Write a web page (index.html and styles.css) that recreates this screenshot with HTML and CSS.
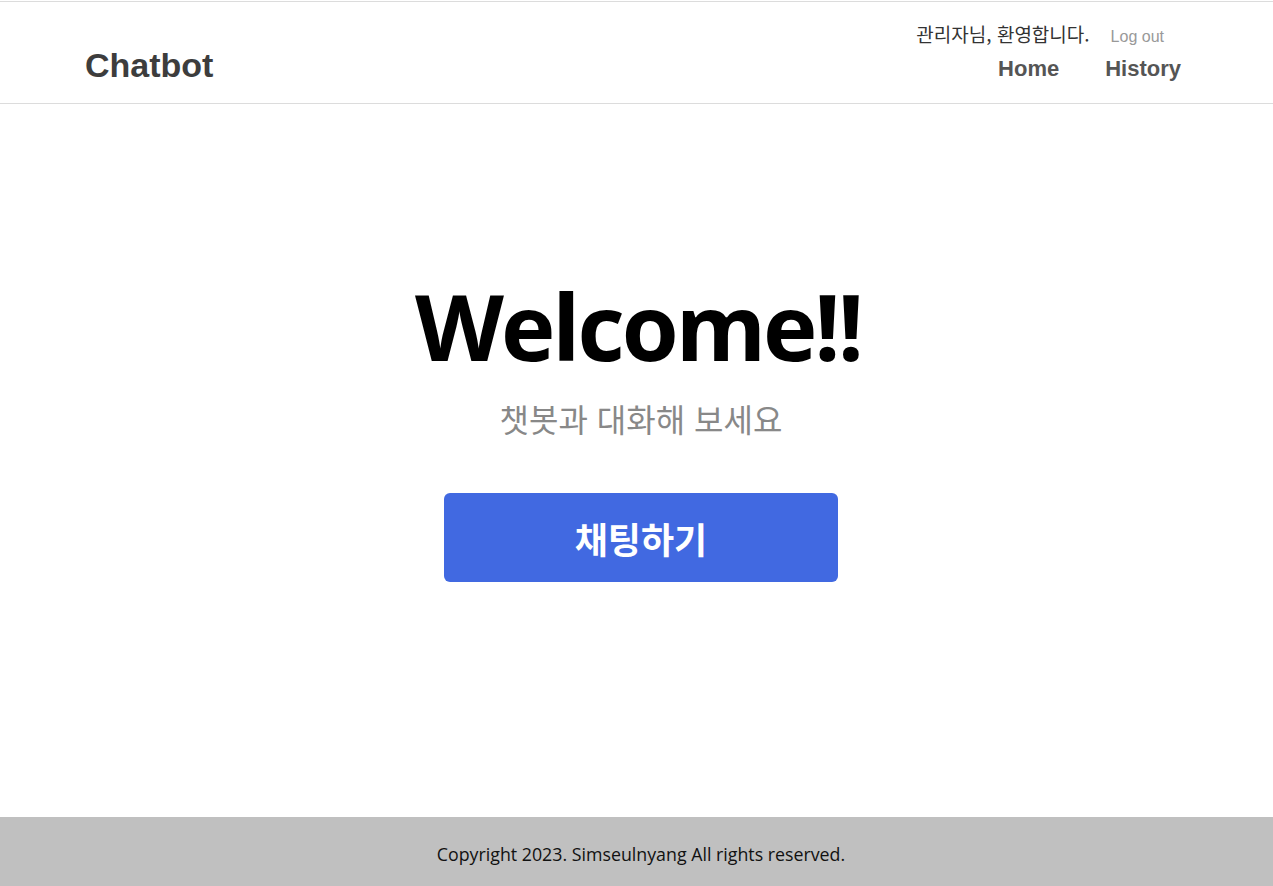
FILE: index.html
```html
<!DOCTYPE html>
<html lang="ko">
<head>
<meta charset="utf-8">
<title>Chatbot</title>
<link rel="stylesheet" href="styles.css">
</head>
<body>
<div class="page">
  <header class="header">
    <div class="brand">Chatbot</div>
    <div class="right">
      <div class="user-row">
        <span class="greeting">관리자님, 환영합니다.</span>
        <a class="logout" href="#">Log out</a>
      </div>
      <nav class="nav">
        <a href="#">Home</a>
        <a href="#">History</a>
      </nav>
    </div>
  </header>
  <main class="main">
    <h1 class="title">Welcome!!</h1>
    <p class="subtitle">챗봇과 대화해 보세요</p>
    <a class="chat-btn" href="#">채팅하기</a>
  </main>
  <footer class="footer">Copyright 2023. Simseulnyang All rights reserved.</footer>
</div>
</body>
</html>
```

FILE: styles.css
```css
* { box-sizing: border-box; }
html, body { margin: 0; padding: 0; }
body { background: #fff; font-family: "Open Sans", "Noto Sans CJK KR", sans-serif; }
a { text-decoration: none; }
.page { display: flex; flex-direction: column; height: 886px; padding-top: 1px; }
.header {
  height: 103px;
  border-top: 1px solid #dcdcdc;
  border-bottom: 1px solid #dcdcdc;
  display: flex;
  justify-content: space-between;
  padding: 0 92px 0 85px;
}
.brand {
  font-family: "Liberation Sans", Arial, sans-serif;
  font-weight: bold;
  font-size: 34px;
  color: #3d3d3d;
  margin-top: 43px;
  line-height: 40px;
}
.right { display: flex; flex-direction: column; align-items: flex-end; padding-top: 18px; }
.user-row { display: flex; align-items: baseline; gap: 21px; padding-right: 17px; height: 28px; }
.greeting { font-family: "Noto Sans CJK KR", sans-serif; font-size: 19px; color: #333; }
.logout { font-family: "Liberation Sans", Arial, sans-serif; font-size: 16px; color: #999; }
.nav { display: flex; gap: 46px; margin-top: 7px; }
.nav a { font-family: "Liberation Sans", Arial, sans-serif; font-weight: bold; font-size: 22px; color: #555; line-height: 28px; }
.main { flex: 1; display: flex; flex-direction: column; align-items: center; padding-top: 172px; padding-left: 9px; }
.title { margin: 0 0 0 -6px; font-family: "Open Sans", sans-serif; font-weight: 700; font-size: 92px; letter-spacing: -3px; line-height: 100px; color: #000; }
.subtitle { margin: 22px 0 0; font-family: "Noto Sans CJK KR", sans-serif; font-size: 32px; color: #888; line-height: 40px; }
.chat-btn {
  margin-top: 55px;
  width: 394px; height: 89px;
  background: #4169e1;
  border-radius: 6px;
  display: flex; align-items: center; justify-content: center;
  color: #fff;
  font-family: "Noto Sans CJK KR", sans-serif;
  font-weight: 700;
  font-size: 36px;
}
.footer {
  height: 69px;
  background: #c0c0c0;
  display: flex; align-items: center; justify-content: center;
  font-family: "Open Sans", "Noto Sans CJK KR", sans-serif;
  font-size: 17.8px;
  color: #111;
  padding-top: 4px;
  padding-left: 9px;
}
```
